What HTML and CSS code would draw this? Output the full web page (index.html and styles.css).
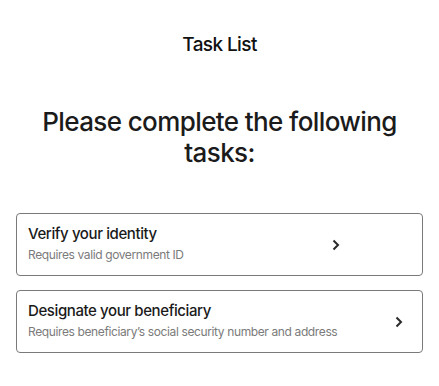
FILE: index.html
```html
<!DOCTYPE html>
<html lang="en">
<head>
<meta charset="utf-8">
<title>Task List</title>
<link rel="stylesheet" href="styles.css">
</head>
<body>
<div class="page">
  <header class="topbar">Task List</header>
  <h1 class="heading">Please complete the following tasks:</h1>
  <div class="tasks">
    <a class="task" href="#">
      <div class="task-text">
        <div class="task-title">Verify your identity</div>
        <div class="task-sub">Requires valid government ID</div>
      </div>
      <svg class="chev chev-inset" width="8" height="12" viewBox="0 0 8 12"><path d="M1.5 1.5 L6 6 L1.5 10.5" fill="none" stroke="#2a2a2a" stroke-width="2"/></svg>
    </a>
    <a class="task" href="#">
      <div class="task-text">
        <div class="task-title">Designate your beneficiary</div>
        <div class="task-sub">Requires beneficiary’s social security number and address</div>
      </div>
      <svg class="chev" width="8" height="12" viewBox="0 0 8 12"><path d="M1.5 1.5 L6 6 L1.5 10.5" fill="none" stroke="#2a2a2a" stroke-width="2"/></svg>
    </a>
  </div>
</div>
</body>
</html>
```
FILE: styles.css
```css
html, body { margin: 0; padding: 0; background: #fff; }
body { font-family: Inter, "Liberation Sans", sans-serif; color: #1a1a1a; }
.page { padding: 0 16px; }
.topbar {
  height: 88px;
  display: flex; align-items: center; justify-content: center;
  font-size: 19px; font-weight: 500; letter-spacing: -0.6px;
  color: #111;
}
.heading {
  margin: 18px 0 0;
  text-align: center;
  font-size: 26px; line-height: 31px; font-weight: 500;
  letter-spacing: -0.6px;
  color: #1b1b1b;
}
.tasks { margin-top: 45px; display: flex; flex-direction: column; gap: 14px; }
.task {
  display: flex; align-items: center; justify-content: space-between;
  height: 63px; box-sizing: border-box;
  padding: 0 19px 0 11px;
  border: 1px solid #7a7a7a; border-radius: 4px;
  text-decoration: none; color: inherit;
}
.task-text { margin-top: -2px; }
.task-title { font-size: 15px; font-weight: 500; letter-spacing: -0.4px; color: #1a1a1a; line-height: 20px; }
.task-sub { font-size: 12px; color: #7b7b7b; letter-spacing: -0.38px; line-height: 16px; margin-top: 3px; }
.chev { flex: none; display: block; }
.chev-inset { margin-right: 63px; }
```
